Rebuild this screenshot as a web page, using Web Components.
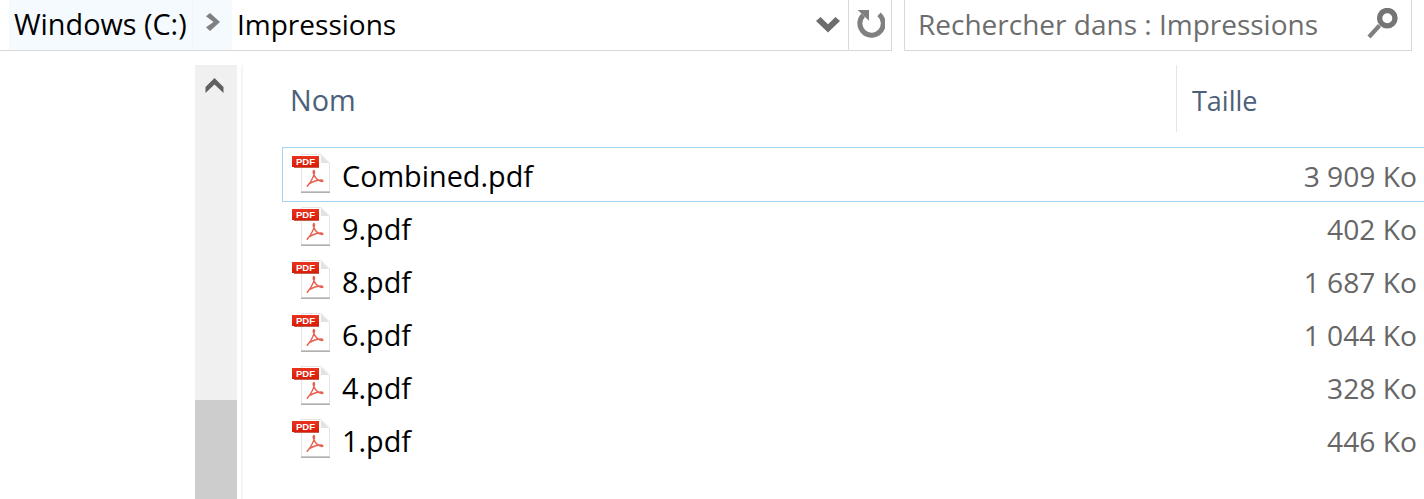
<!DOCTYPE html>
<html lang="fr">
<head>
<meta charset="utf-8">
<title>Impressions</title>
<style>
  html, body { margin: 0; height: 100%; background: #fff; overflow: hidden; }
  body { font-family: "Open Sans", "Noto Sans", sans-serif; }
</style>
</head>
<body>
<explorer-window>
  <address-bar slot="top"></address-bar>
  <scroll-rail slot="rail"></scroll-rail>
  <file-list slot="list">
    <file-row name="Combined.pdf" size="3 909 Ko" selected></file-row>
    <file-row name="9.pdf" size="402 Ko"></file-row>
    <file-row name="8.pdf" size="1 687 Ko"></file-row>
    <file-row name="6.pdf" size="1 044 Ko"></file-row>
    <file-row name="4.pdf" size="328 Ko"></file-row>
    <file-row name="1.pdf" size="446 Ko"></file-row>
  </file-list>
</explorer-window>
<script>
class ExplorerWindow extends HTMLElement {
  constructor() {
    super();
    this.attachShadow({ mode: 'open' });
    this.shadowRoot.innerHTML = `
      <style>
        :host { display: flex; flex-direction: column; width: 1424px; height: 499px; overflow: hidden; }
        .body { flex: 1; display: flex; min-height: 0; padding-top: 14px; }
        .nav { width: 195px; flex: none; }
        .gap { width: 4px; flex: none; }
        .line { width: 2px; flex: none; background: #f5f5f5; }
        .main { flex: 1; min-width: 0; }
      </style>
      <slot name="top"></slot>
      <div class="body">
        <div class="nav"></div>
        <slot name="rail"></slot>
        <div class="gap"></div>
        <div class="line"></div>
        <div class="main"><slot name="list"></slot></div>
      </div>
    `;
  }
}
customElements.define('explorer-window', ExplorerWindow);

class AddressBar extends HTMLElement {
  constructor() {
    super();
    this.attachShadow({ mode: 'open' });
    this.shadowRoot.innerHTML = `
      <style>
        :host { display: flex; height: 51px; flex: none; font-size: 28px; color: #000; }
        .path { width: 892px; flex: none; display: flex; box-sizing: border-box; height: 51px;
                border-bottom: 1px solid #d9d9d9; border-right: 1px solid #d9d9d9; padding-left: 9px; }
        .crumb { background: #f5faff; display: flex; align-items: center; height: 50px; box-sizing: border-box; }
        .crumb.root { width: 183px; padding: 0 0 3px 5px; white-space: nowrap; font-size: 28.8px; }
        .crumb.arrow { width: 40px; padding: 0 0 6px 13px; border-left: 1px solid #eef5fb; }
        .here { padding: 0 0 3px 5px; flex: 1; display: flex; align-items: center; height: 50px; box-sizing: border-box; }
        .drop { width: 40px; display: flex; align-items: center; justify-content: center; }
        .refresh { width: 43px; flex: none; box-sizing: border-box; border-left: 1px solid #d9d9d9; display: flex; align-items: center; justify-content: center; }
        .space { width: 12px; flex: none; }
        .search { width: 508px; flex: none; box-sizing: border-box; height: 51px; border: 1px solid #d9d9d9; border-top: 0;
                  display: flex; align-items: center; padding: 0 13px 3px 13px; color: #6d6d6d; white-space: nowrap; }
        .search span { flex: 1; }
        svg { display: block; }
      </style>
      <div class="path">
        <div class="crumb root">Windows (C:)</div>
        <div class="crumb arrow">
          <svg width="14" height="18" viewBox="0 0 14 18"><path d="M0 3.3 L4 0 L14 9 L4 18 L0 14.3 L7.5 9 Z" fill="#808080"/></svg>
        </div>
        <div class="here">Impressions</div>
        <div class="drop">
          <svg width="24" height="16" viewBox="0 0 24 16"><path d="M0 4 L4.5 0 L12 7.3 L19.5 0 L24 4 L12 15.5 Z" fill="#6d6d6d"/></svg>
        </div>
        <div class="refresh">
          <svg width="30" height="30" viewBox="0 0 30 30"><path d="M8.2 5.3 A11.7 11.7 0 1 0 24 4.4" fill="none" stroke="#808080" stroke-width="5"/><path d="M2.7 0 H14 V10.7 Z" fill="#808080"/></svg>
        </div>
      </div>
      <div class="space"></div>
      <div class="search">
        <span>Rechercher dans : Impressions</span>
        <svg width="32" height="32" viewBox="0 0 32 32"><circle cx="21.3" cy="10.2" r="7.7" fill="none" stroke="#757575" stroke-width="5.4"/><path d="M13.5 17.5 L3 29" fill="none" stroke="#808080" stroke-width="4.2"/></svg>
      </div>
    `;
  }
}
customElements.define('address-bar', AddressBar);

class ScrollRail extends HTMLElement {
  constructor() {
    super();
    this.attachShadow({ mode: 'open' });
    this.shadowRoot.innerHTML = `
      <style>
        :host { display: flex; flex-direction: column; width: 42px; flex: none; background: #f0f0f0; }
        .up { height: 335px; padding: 12px 0 0 10px; box-sizing: border-box; flex: none; }
        .thumb { flex: 1; background: #cdcdcd; }
        svg { display: block; }
      </style>
      <div class="up">
        <svg width="19" height="17" viewBox="0 0 19 17"><path d="M0.5 16 V10 L9.5 1 L18.5 10 V16 L9.5 7.5 Z" fill="#606060"/></svg>
      </div>
      <div class="thumb"></div>
    `;
  }
}
customElements.define('scroll-rail', ScrollRail);

class FileList extends HTMLElement {
  constructor() {
    super();
    this.attachShadow({ mode: 'open' });
    this.shadowRoot.innerHTML = `
      <style>
        :host { display: block; }
        .head { display: flex; height: 67px; margin-bottom: 16px; font-size: 27px; color: #4c607a; align-items: stretch; }
        .nom { width: 933px; box-sizing: border-box; padding: 15px 0 0 47px; flex: none; font-size: 28.8px; }
        .taille { flex: 1; border-left: 1px solid #e5e5e5; padding: 17px 0 0 15px; }
      </style>
      <div class="head">
        <div class="nom">Nom</div>
        <div class="taille">Taille</div>
      </div>
      <slot></slot>
    `;
  }
}
customElements.define('file-list', FileList);

class FileRow extends HTMLElement {
  constructor() {
    super();
    this.attachShadow({ mode: 'open' });
    this.shadowRoot.innerHTML = `
      <style>
        :host { display: flex; height: 53px; margin-left: 40px; align-items: center; color: #000; }
        :host([selected]) { outline: 1px solid #a5d3f0; }
        svg { display: block; flex: none; margin-left: 9px; }
        .name { padding: 2px 0 0 11px; flex: 1; white-space: nowrap; font-size: 28.8px; }
        .size { padding: 2px 7px 0 0; color: #666; white-space: nowrap; font-size: 28.2px; }
      </style>
      <svg width="39" height="41" viewBox="0 0 39 41">
        <defs>
          <linearGradient id="badge" x1="0" y1="0" x2="0" y2="1">
            <stop offset="0" stop-color="#e8341f"/>
            <stop offset="1" stop-color="#d91c08"/>
          </linearGradient>
        </defs>
        <path d="M9.5 0.5 H29 L37.5 9 V37.5 H9.5 Z" fill="#fff" stroke="#e4e4e4" stroke-width="1"/>
        <path d="M29 1 V9 H37 Z" fill="#e2e2e2"/>
        <rect x="9" y="37.5" width="29" height="1.5" fill="#b0b0b0"/>
        <rect x="0" y="2" width="27" height="11" fill="url(#badge)"/>
        <rect x="2" y="13" width="25" height="1" fill="#c4604f"/>
        <text x="13.5" y="11" font-family="Liberation Sans" font-size="9.5" font-weight="700" fill="#fff" text-anchor="middle">PDF</text>
        <path d="M15.5 32 C19 28 23 20 22.5 17.5 C22 15.5 20.5 17 21.5 19.5 C23 24 26.5 27 30 27.5 C31.5 27.5 31 26 29 26 C25 26 20 28 17 30 C15 32 15 33 15.5 32 Z" fill="none" stroke="#e8604f" stroke-width="1.4"/>
      </svg>
      <div class="name"></div>
      <div class="size"></div>
    `;
  }
  connectedCallback() {
    this.shadowRoot.querySelector('.name').textContent = this.getAttribute('name');
    this.shadowRoot.querySelector('.size').textContent = this.getAttribute('size');
  }
}
customElements.define('file-row', FileRow);
</script>
</body>
</html>
